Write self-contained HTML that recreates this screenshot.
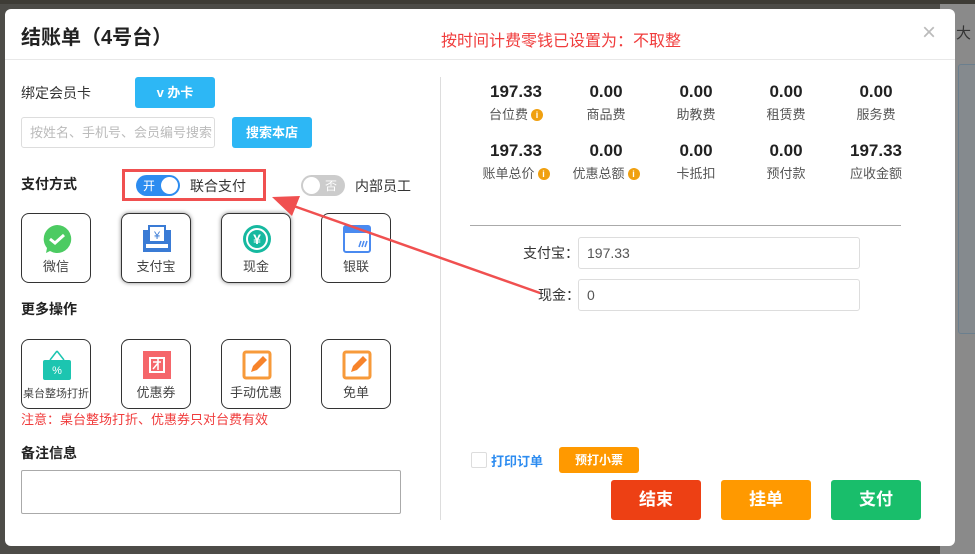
<!DOCTYPE html>
<html><head><meta charset="utf-8"><style>
*{box-sizing:border-box;margin:0;padding:0}
body{width:975px;height:554px;overflow:hidden;background:#4d4c48;font-family:"Liberation Sans","Noto Sans CJK SC",sans-serif;position:relative;color:#333}
.side{position:absolute;left:940px;top:4px;width:35px;height:550px;background:#8a8a8a}
.modal{position:absolute;left:5px;top:9px;width:950px;height:537px;background:#fff;border-radius:6px}
.a{position:absolute;white-space:nowrap}
.btn{position:absolute;color:#fff;text-align:center;border-radius:3px;font-weight:bold}
.card{position:absolute;width:70px;height:70px;border:1px solid #333;border-radius:8px;text-align:center;font-size:13px;color:#444}
.card .l{position:absolute;left:0;right:0;bottom:7px}
.card .ic{position:absolute;left:20px;top:10px;width:30px;height:30px}
.num{position:absolute;width:90px;text-align:center;font-size:17px;font-weight:bold;color:#222}
.lab{position:absolute;width:90px;text-align:center;font-size:13px;color:#555}
.i{display:inline-block;width:12px;height:12px;border-radius:50%;background:#f0a010;color:#fff;font-size:9px;line-height:12px;text-align:center;font-weight:bold;vertical-align:1px;margin-left:3px}
.inp{position:absolute;border:1px solid #ddd;border-radius:3px;font-size:14px;color:#555;padding-left:8px;line-height:30px}
</style></head><body>
<div style="position:absolute;left:0;top:0;width:975px;height:4px;background:#3e3c36"></div>
<div class="side"><div style="position:absolute;left:18px;top:60px;width:20px;height:270px;border:1px solid #6b7f8e;border-radius:3px;background:#858a8e"></div><div class="a" style="left:16px;top:18px;font-size:15px;color:#333">大</div></div>
<div class="modal">
<div class="a" style="left:16px;top:12px;font-size:20px;font-weight:bold;color:#222">结账单（4号台）</div>
<div class="a" style="left:436px;top:18px;font-size:16px;color:#f03c3c">按时间计费零钱已设置为：不取整</div>
<div class="a" style="left:917px;top:10px;font-size:24px;color:#bbb;font-weight:lighter">×</div>
<div style="position:absolute;left:0;top:50px;width:950px;height:1px;background:#e8e8e8"></div>
<div style="position:absolute;left:435px;top:68px;width:1px;height:443px;background:#ddd"></div>

<div class="a" style="left:16px;top:74px;font-size:14px;color:#333">绑定会员卡</div>
<div class="btn" style="left:130px;top:68px;width:80px;height:31px;line-height:31px;background:#2db7f5;font-size:13px">v 办卡</div>
<div class="inp" style="left:16px;top:108px;width:194px;height:31px;color:#bbb;font-size:13px;overflow:hidden">按姓名、手机号、会员编号搜索</div>
<div class="btn" style="left:227px;top:108px;width:80px;height:31px;line-height:31px;background:#2db7f5;font-size:13px">搜索本店</div>

<div class="a" style="left:16px;top:165px;font-size:14px;font-weight:bold;color:#222">支付方式</div>
<div style="position:absolute;left:117px;top:160px;width:144px;height:32px;border:3px solid #f05050"></div>
<div style="position:absolute;left:131px;top:166px;width:44px;height:21px;border-radius:11px;background:#2d8cf0"><span class="a" style="left:7px;top:2px;color:#fff;font-size:12px">开</span><div style="position:absolute;right:2px;top:2px;width:17px;height:17px;border-radius:50%;background:#fff"></div></div>
<div class="a" style="left:185px;top:167px;font-size:14px">联合支付</div>
<div style="position:absolute;left:296px;top:166px;width:44px;height:21px;border-radius:11px;background:#ccc"><div style="position:absolute;left:2px;top:2px;width:17px;height:17px;border-radius:50%;background:#fff"></div><span class="a" style="left:24px;top:2px;color:#fff;font-size:12px">否</span></div>
<div class="a" style="left:350px;top:167px;font-size:14px">内部员工</div>

<div class="card" style="left:16px;top:204px"><svg class="ic" viewBox="0 0 30 30"><path d="M15 1a14 14 0 1 1-7 26l-4 2 1-5A14 14 0 0 1 15 1z" fill="#4ccb62"/><path d="M8 15l5 4 9-8" stroke="#fff" stroke-width="3" fill="none"/></svg><div class="l">微信</div></div>
<div class="card" style="left:116px;top:204px;box-shadow:0 0 4px #888"><svg class="ic" viewBox="0 0 30 30"><rect x="1" y="6" width="28" height="22" fill="#3a7bd5"/><rect x="7" y="2" width="16" height="16" fill="#fff" stroke="#3a7bd5" stroke-width="2"/><text x="15" y="15" font-size="11" text-anchor="middle" fill="#3a7bd5">¥</text><rect x="4" y="20" width="22" height="4" fill="#fff"/></svg><div class="l">支付宝</div></div>
<div class="card" style="left:216px;top:204px;box-shadow:0 0 4px #888"><svg class="ic" viewBox="0 0 30 30"><circle cx="15" cy="15" r="14" fill="#16b9a0"/><circle cx="15" cy="15" r="10" fill="none" stroke="#fff" stroke-width="2"/><text x="15" y="20" font-size="14" font-weight="bold" text-anchor="middle" fill="#fff">¥</text></svg><div class="l">现金</div></div>
<div class="card" style="left:316px;top:204px"><svg class="ic" viewBox="0 0 30 30"><rect x="2" y="2" width="26" height="26" rx="2" fill="#fff" stroke="#4a8af0" stroke-width="2"/><rect x="2" y="2" width="26" height="7" fill="#4a8af0"/><path d="M17 23l2-6M20 23l2-6M23 23l2-6" stroke="#4a8af0" stroke-width="1.5"/></svg><div class="l">银联</div></div>

<div class="a" style="left:16px;top:290px;font-size:14px;font-weight:bold;color:#222">更多操作</div>
<div class="card" style="left:16px;top:330px"><svg class="ic" viewBox="0 0 30 30"><path d="M15 1L8 10M15 1L22 10" stroke="#1cc5b0" stroke-width="1.5"/><rect x="1" y="10" width="28" height="20" rx="2" fill="#1cc5b0"/><text x="15" y="24" font-size="11" text-anchor="middle" fill="#fff">%</text></svg><div class="l" style="font-size:11px">桌台整场打折</div></div>
<div class="card" style="left:116px;top:330px"><svg class="ic" viewBox="0 0 30 30"><rect x="1" y="1" width="28" height="28" fill="#f5666a"/><rect x="8" y="8" width="14" height="14" fill="none" stroke="#fff" stroke-width="2"/><path d="M11 12h8M16 9v11M16 13l-5 6" stroke="#fff" stroke-width="1.5"/></svg><div class="l">优惠券</div></div>
<div class="card" style="left:216px;top:330px"><svg class="ic" viewBox="0 0 30 30"><rect x="2" y="2" width="26" height="26" rx="2" fill="none" stroke="#f79a3a" stroke-width="3"/><path d="M9 22l2-6 10-10 4 4-10 10z" fill="#f7832a"/></svg><div class="l">手动优惠</div></div>
<div class="card" style="left:316px;top:330px"><svg class="ic" viewBox="0 0 30 30"><rect x="2" y="2" width="26" height="26" rx="2" fill="none" stroke="#f79a3a" stroke-width="3"/><path d="M9 22l2-6 10-10 4 4-10 10z" fill="#f7832a"/></svg><div class="l">免单</div></div>
<div class="a" style="left:16px;top:400px;font-size:13px;color:#f03c3c">注意：桌台整场打折、优惠券只对台费有效</div>

<div class="a" style="left:16px;top:434px;font-size:14px;font-weight:bold;color:#222">备注信息</div>
<div style="position:absolute;left:16px;top:461px;width:380px;height:44px;border:1px solid #aaa;border-radius:2px"></div>

<div class="num" style="left:466px;top:73px">197.33</div><div class="lab" style="left:466px;top:95px">台位费<span class="i">i</span></div>
<div class="num" style="left:556px;top:73px">0.00</div><div class="lab" style="left:556px;top:95px">商品费</div>
<div class="num" style="left:646px;top:73px">0.00</div><div class="lab" style="left:646px;top:95px">助教费</div>
<div class="num" style="left:736px;top:73px">0.00</div><div class="lab" style="left:736px;top:95px">租赁费</div>
<div class="num" style="left:826px;top:73px">0.00</div><div class="lab" style="left:826px;top:95px">服务费</div>
<div class="num" style="left:466px;top:132px">197.33</div><div class="lab" style="left:466px;top:154px">账单总价<span class="i">i</span></div>
<div class="num" style="left:556px;top:132px">0.00</div><div class="lab" style="left:556px;top:154px">优惠总额<span class="i">i</span></div>
<div class="num" style="left:646px;top:132px">0.00</div><div class="lab" style="left:646px;top:154px">卡抵扣</div>
<div class="num" style="left:736px;top:132px">0.00</div><div class="lab" style="left:736px;top:154px">预付款</div>
<div class="num" style="left:826px;top:132px">197.33</div><div class="lab" style="left:826px;top:154px">应收金额</div>

<div style="position:absolute;left:465px;top:216px;width:431px;height:1px;background:#aaa"></div>
<div class="a" style="left:518px;top:234px;font-size:14px">支付宝：</div>
<div class="inp" style="left:573px;top:228px;width:282px;height:32px">197.33</div>
<div class="a" style="left:533px;top:276px;font-size:14px">现金：</div>
<div class="inp" style="left:573px;top:270px;width:282px;height:32px">0</div>

<div style="position:absolute;left:466px;top:443px;width:16px;height:16px;border:1px solid #ddd;border-radius:2px"></div>
<div class="a" style="left:486px;top:442px;font-size:13px;color:#2d8cf0;font-weight:bold">打印订单</div>
<div class="btn" style="left:554px;top:438px;width:80px;height:26px;line-height:26px;background:#ff9900;font-size:12px">预打小票</div>
<div class="btn" style="left:606px;top:471px;width:90px;height:40px;line-height:40px;background:#ed4014;font-size:17px">结束</div>
<div class="btn" style="left:716px;top:471px;width:90px;height:40px;line-height:40px;background:#ff9900;font-size:17px">挂单</div>
<div class="btn" style="left:826px;top:471px;width:90px;height:40px;line-height:40px;background:#19be6b;font-size:17px">支付</div>
</div>
<svg style="position:absolute;left:0;top:0" width="975" height="554"><line x1="288" y1="204" x2="540" y2="293" stroke="#f05050" stroke-width="2.5"/><path d="M272 197L300 196L292 216Z" fill="#f05050"/></svg>
</body></html>
